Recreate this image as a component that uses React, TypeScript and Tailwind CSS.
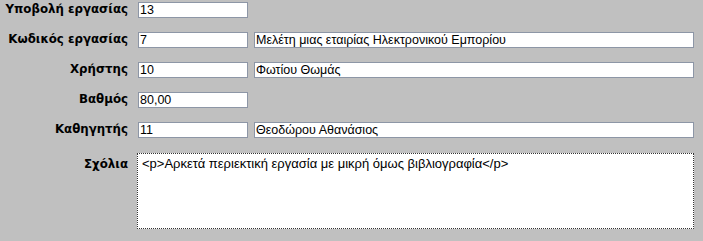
import React from 'react';

const ROWS: { label: string; code: string; name?: string }[] = [
  { label: 'Υποβολή εργασίας', code: '13' },
  { label: 'Κωδικός εργασίας', code: '7', name: 'Μελέτη μιας εταιρίας Ηλεκτρονικού Εμπορίου' },
  { label: 'Χρήστης', code: '10', name: 'Φωτίου Θωμάς' },
  { label: 'Βαθμός', code: '80,00' },
  { label: 'Καθηγητής', code: '11', name: 'Θεοδώρου Αθανάσιος' },
];

const labelCls =
  "w-[128px] shrink-0 text-right font-['DejaVu_Sans',sans-serif] text-[11.8px] font-bold leading-none text-black";
const fieldCls =
  "h-[16px] border border-[#8d96a6] bg-white px-[1px] font-['Liberation_Sans',Arial,sans-serif] text-[12.5px] leading-[14px] text-black outline-none";

function Field({ value, className }: { value: string; className: string }) {
  return <input readOnly value={value} className={`${fieldCls} ${className}`} />;
}

export default function App() {
  return (
    <div className="h-[241px] w-[703px] bg-[#c0c0c0] pt-[2px]">
      <div className="flex flex-col gap-[14px]">
        {ROWS.map(row => (
          <div key={row.label} className="flex items-center">
            <span className={labelCls}>{row.label}</span>
            <Field value={row.code} className="ml-[10px] w-[110px]" />
            {row.name && <Field value={row.name} className="ml-[6px] w-[440px]" />}
          </div>
        ))}
      </div>

      <div className="mt-[15px] flex items-start">
        <span className={`${labelCls} pt-[6px]`}>Σχόλια</span>
        <textarea
          readOnly
          value="<p>Αρκετά περιεκτική εργασία με μικρή όμως βιβλιογραφία</p>"
          className="ml-[9px] h-[76px] w-[557px] resize-none border border-dotted border-[#333] bg-white px-[4px] pt-[2px] font-['Liberation_Sans',Arial,sans-serif] text-[13px] leading-[15px] text-black outline-none"
        />
      </div>
    </div>
  );
}
